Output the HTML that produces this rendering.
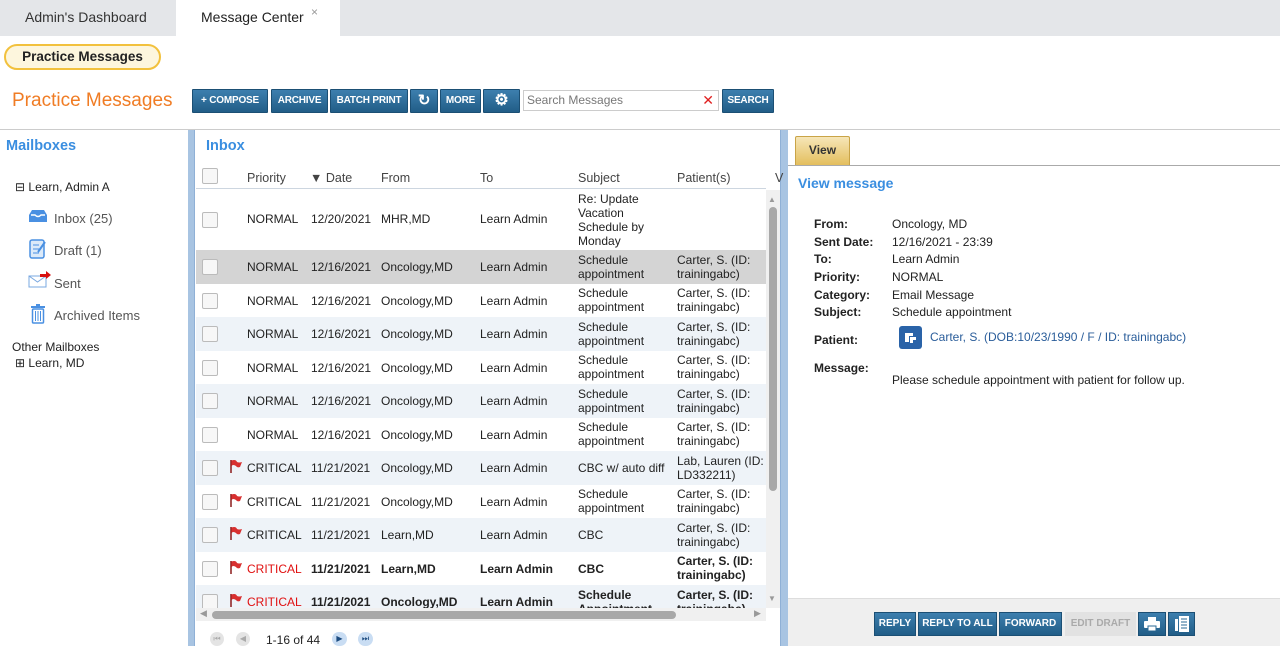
<!DOCTYPE html>
<html><head><meta charset="utf-8">
<style>
*{box-sizing:border-box;margin:0;padding:0}
body{width:1280px;height:646px;overflow:hidden;background:#fff;font-family:"Liberation Sans",Arial,sans-serif;font-size:12px;color:#222;position:relative}
.a{position:absolute}
.tabbar{left:0;top:0;width:1280px;height:36px;background:#e4e6e9}
.tab{top:0;height:36px;line-height:34px;font-size:14px;color:#333}
.btn{top:89px;height:24px;background:linear-gradient(#3d7fae,#215d87);border:1px solid #1b4f74;color:#fff;font-weight:bold;font-size:10px;line-height:22px;text-align:center;border-radius:1px;letter-spacing:-0.2px}
.row{left:196px;width:570px;font-size:12px;color:#222}
.row div{position:absolute}
.cb{left:6px;width:16px;height:16px;border:1px solid #bbb;border-radius:2px;background:#f7f7f7}
.two{line-height:14px}
.hd{top:171px;color:#444;font-size:12.5px}
.lbl{left:814px;font-weight:bold;color:#222;font-size:12px}
.val{left:892px;font-size:12px;color:#222}
.fb{top:612px;height:24px;background:linear-gradient(#3d7fae,#215d87);border:1px solid #1b4f74;color:#fff;font-weight:bold;font-size:10px;line-height:22px;text-align:center}
.flag{position:absolute;left:33px;width:14px;height:14px}
</style></head><body>
<div class="a tabbar"></div>
<div class="a tab" style="left:25px">Admin's Dashboard</div>
<div class="a" style="left:176px;top:0;width:164px;height:36px;background:#fff"></div>
<div class="a tab" style="left:201px;color:#222">Message Center</div>
<div class="a" style="left:311px;top:5px;color:#999;font-size:12px">×</div>

<div class="a" style="left:4px;top:44px;width:157px;height:26px;border:2px solid #f2c13d;border-radius:13px;background:#fdf6dd;text-align:center;line-height:22px;font-size:13.5px;font-weight:bold;color:#222">Practice Messages</div>

<div class="a" style="left:12px;top:90px;font-size:19px;color:#f07c24">Practice Messages</div>
<div class="a btn" style="left:192px;width:76px">+ COMPOSE</div>
<div class="a btn" style="left:271px;width:57px">ARCHIVE</div>
<div class="a btn" style="left:330px;width:78px">BATCH PRINT</div>
<div class="a btn" style="left:410px;width:28px;font-size:15px">↻</div>
<div class="a btn" style="left:440px;width:41px">MORE</div>
<div class="a btn" style="left:483px;width:37px;font-size:16px;line-height:21px">⚙</div>
<div class="a" style="left:523px;top:90px;width:196px;height:21px;border:1px solid #ccc;color:#777;padding-left:3px;line-height:19px;font-size:12px">Search Messages<span style="position:absolute;right:4px;color:#e02020;font-size:14px">✕</span></div>
<div class="a btn" style="left:722px;width:52px">SEARCH</div>

<div class="a" style="left:0;top:129px;width:1280px;height:1px;background:#ccc"></div>

<!-- left -->
<div class="a" style="left:6px;top:138px;font-size:14.5px;font-weight:bold;color:#3a8ee0">Mailboxes</div>
<div class="a" style="left:15px;top:180px;font-size:12px">⊟ Learn, Admin A</div>
<svg class="a" style="left:28px;top:209px" width="20" height="14" viewBox="0 0 20 14"><path d="M1 6 L4 1 H16 L19 6 V13 H1 Z" fill="#4a90e2"/><path d="M3 6 H7 Q10 9 13 6 H17" fill="none" stroke="#fff" stroke-width="1.5"/></svg>
<div class="a" style="left:54px;top:211px;font-size:13px;color:#555">Inbox (25)</div>
<svg class="a" style="left:29px;top:239px" width="18" height="20" viewBox="0 0 18 20"><rect x="1" y="1" width="14" height="18" rx="2" fill="#dceaf9" stroke="#4a90e2" stroke-width="1.5"/><path d="M4 6H10M4 10H10M4 14H10" stroke="#4a90e2"/><path d="M9 13 L16 3" stroke="#4a90e2" stroke-width="2"/></svg>
<div class="a" style="left:54px;top:243px;font-size:13px;color:#555">Draft (1)</div>
<svg class="a" style="left:28px;top:270px" width="24" height="18" viewBox="0 0 24 18"><rect x="1" y="6" width="17" height="11" fill="#fff" stroke="#7aa8e0"/><path d="M1 6 L9.5 12 L18 6" fill="none" stroke="#7aa8e0"/><path d="M12 4 H18 V1 L23 5 L18 9 V7 H12Z" fill="#d81010"/></svg>
<div class="a" style="left:54px;top:276px;font-size:13px;color:#555">Sent</div>
<svg class="a" style="left:30px;top:304px" width="16" height="20" viewBox="0 0 16 20"><rect x="1" y="2" width="14" height="2" fill="#4a90e2"/><rect x="6" y="0" width="4" height="2" fill="#4a90e2"/><rect x="2.5" y="5" width="11" height="14" rx="1" fill="none" stroke="#4a90e2" stroke-width="1.5"/><path d="M5.5 7V17M8 7V17M10.5 7V17" stroke="#4a90e2"/></svg>
<div class="a" style="left:54px;top:308px;font-size:13px;color:#555">Archived Items</div>
<div class="a" style="left:12px;top:340px;font-size:12px">Other Mailboxes</div>
<div class="a" style="left:15px;top:356px;font-size:12px">⊞ Learn, MD</div>

<!-- splitters -->
<div class="a" style="left:188px;top:130px;width:7px;height:516px;background:#a8c4e2;border-right:1px solid #8fb0d6"></div>
<div class="a" style="left:780px;top:130px;width:8px;height:516px;background:#a8c4e2;border-left:1px solid #8fb0d6"></div>

<!-- middle -->
<div class="a" style="left:206px;top:138px;font-size:14.5px;font-weight:bold;color:#3a8ee0">Inbox</div>
<div class="a cb" style="left:202px;top:168px"></div>
<div class="a hd" style="left:247px">Priority</div>
<div class="a hd" style="left:310px">▼ Date</div>
<div class="a hd" style="left:381px">From</div>
<div class="a hd" style="left:480px">To</div>
<div class="a hd" style="left:578px">Subject</div>
<div class="a hd" style="left:677px">Patient(s)</div>
<div class="a hd" style="left:775px">V</div>
<div class="a" style="left:196px;top:188px;width:570px;height:1px;background:#cdd6e0"></div>

<div class="a row" style="top:190px;height:60px;background:#fff">
<div class="cb" style="top:22px"></div><div style="left:51px;top:22px">NORMAL</div><div style="left:115px;top:22px">12/20/2021</div><div style="left:185px;top:22px">MHR,MD</div><div style="left:284px;top:22px">Learn Admin</div><div class="two" style="left:382px;top:2px">Re: Update<br>Vacation<br>Schedule by<br>Monday</div></div>

<div class="a row" style="top:250px;height:34px;background:#d4d4d4">
<div class="cb" style="top:9px"></div><div style="left:51px;top:10px">NORMAL</div><div style="left:115px;top:10px">12/16/2021</div><div style="left:185px;top:10px">Oncology,MD</div><div style="left:284px;top:10px">Learn Admin</div><div class="two" style="left:382px;top:3px">Schedule<br>appointment</div><div class="two" style="left:481px;top:3px">Carter, S. (ID:<br>trainingabc)</div></div>

<div class="a row" style="top:284px;height:33px;background:#fff"><div class="cb" style="top:9px"></div><div style="left:51px;top:10px">NORMAL</div><div style="left:115px;top:10px">12/16/2021</div><div style="left:185px;top:10px">Oncology,MD</div><div style="left:284px;top:10px">Learn Admin</div><div class="two" style="left:382px;top:2px">Schedule<br>appointment</div><div class="two" style="left:481px;top:2px">Carter, S. (ID:<br>trainingabc)</div></div>
<div class="a row" style="top:317px;height:34px;background:#eef3f8"><div class="cb" style="top:9px"></div><div style="left:51px;top:10px">NORMAL</div><div style="left:115px;top:10px">12/16/2021</div><div style="left:185px;top:10px">Oncology,MD</div><div style="left:284px;top:10px">Learn Admin</div><div class="two" style="left:382px;top:3px">Schedule<br>appointment</div><div class="two" style="left:481px;top:3px">Carter, S. (ID:<br>trainingabc)</div></div>
<div class="a row" style="top:351px;height:33px;background:#fff"><div class="cb" style="top:9px"></div><div style="left:51px;top:10px">NORMAL</div><div style="left:115px;top:10px">12/16/2021</div><div style="left:185px;top:10px">Oncology,MD</div><div style="left:284px;top:10px">Learn Admin</div><div class="two" style="left:382px;top:2px">Schedule<br>appointment</div><div class="two" style="left:481px;top:2px">Carter, S. (ID:<br>trainingabc)</div></div>
<div class="a row" style="top:384px;height:34px;background:#eef3f8"><div class="cb" style="top:9px"></div><div style="left:51px;top:10px">NORMAL</div><div style="left:115px;top:10px">12/16/2021</div><div style="left:185px;top:10px">Oncology,MD</div><div style="left:284px;top:10px">Learn Admin</div><div class="two" style="left:382px;top:3px">Schedule<br>appointment</div><div class="two" style="left:481px;top:3px">Carter, S. (ID:<br>trainingabc)</div></div>
<div class="a row" style="top:418px;height:33px;background:#fff"><div class="cb" style="top:9px"></div><div style="left:51px;top:10px">NORMAL</div><div style="left:115px;top:10px">12/16/2021</div><div style="left:185px;top:10px">Oncology,MD</div><div style="left:284px;top:10px">Learn Admin</div><div class="two" style="left:382px;top:2px">Schedule<br>appointment</div><div class="two" style="left:481px;top:2px">Carter, S. (ID:<br>trainingabc)</div></div>

<div class="a row" style="top:451px;height:34px;background:#eef3f8"><div class="cb" style="top:9px"></div><svg class="flag" style="top:8px" viewBox="0 0 14 14"><path d="M2 1V14" stroke="#8b1a1a" stroke-width="1.5"/><path d="M2.5 1.5 Q7 0 8 3 Q10 4 13 3 L11 8 Q8 9 7 7 Q4 5 2.5 7Z" fill="#d83030"/></svg><div style="left:51px;top:10px">CRITICAL</div><div style="left:115px;top:10px">11/21/2021</div><div style="left:185px;top:10px">Oncology,MD</div><div style="left:284px;top:10px">Learn Admin</div><div style="left:382px;top:10px">CBC w/ auto diff</div><div class="two" style="left:481px;top:3px">Lab, Lauren (ID:<br>LD332211)</div></div>
<div class="a row" style="top:485px;height:33px;background:#fff"><div class="cb" style="top:9px"></div><svg class="flag" style="top:8px" viewBox="0 0 14 14"><path d="M2 1V14" stroke="#8b1a1a" stroke-width="1.5"/><path d="M2.5 1.5 Q7 0 8 3 Q10 4 13 3 L11 8 Q8 9 7 7 Q4 5 2.5 7Z" fill="#d83030"/></svg><div style="left:51px;top:10px">CRITICAL</div><div style="left:115px;top:10px">11/21/2021</div><div style="left:185px;top:10px">Oncology,MD</div><div style="left:284px;top:10px">Learn Admin</div><div class="two" style="left:382px;top:2px">Schedule<br>appointment</div><div class="two" style="left:481px;top:2px">Carter, S. (ID:<br>trainingabc)</div></div>
<div class="a row" style="top:518px;height:34px;background:#eef3f8"><div class="cb" style="top:9px"></div><svg class="flag" style="top:8px" viewBox="0 0 14 14"><path d="M2 1V14" stroke="#8b1a1a" stroke-width="1.5"/><path d="M2.5 1.5 Q7 0 8 3 Q10 4 13 3 L11 8 Q8 9 7 7 Q4 5 2.5 7Z" fill="#d83030"/></svg><div style="left:51px;top:10px">CRITICAL</div><div style="left:115px;top:10px">11/21/2021</div><div style="left:185px;top:10px">Learn,MD</div><div style="left:284px;top:10px">Learn Admin</div><div style="left:382px;top:10px">CBC</div><div class="two" style="left:481px;top:3px">Carter, S. (ID:<br>trainingabc)</div></div>
<div class="a row" style="top:552px;height:33px;background:#fff;font-weight:bold"><div class="cb" style="top:9px"></div><svg class="flag" style="top:8px" viewBox="0 0 14 14"><path d="M2 1V14" stroke="#8b1a1a" stroke-width="1.5"/><path d="M2.5 1.5 Q7 0 8 3 Q10 4 13 3 L11 8 Q8 9 7 7 Q4 5 2.5 7Z" fill="#d83030"/></svg><div style="left:51px;top:10px;color:#e01010;font-weight:normal">CRITICAL</div><div style="left:115px;top:10px">11/21/2021</div><div style="left:185px;top:10px">Learn,MD</div><div style="left:284px;top:10px">Learn Admin</div><div style="left:382px;top:10px">CBC</div><div class="two" style="left:481px;top:2px">Carter, S. (ID:<br>trainingabc)</div></div>
<div class="a row" style="top:585px;height:23px;background:#eef3f8;font-weight:bold;overflow:hidden"><div class="cb" style="top:9px"></div><svg class="flag" style="top:8px" viewBox="0 0 14 14"><path d="M2 1V14" stroke="#8b1a1a" stroke-width="1.5"/><path d="M2.5 1.5 Q7 0 8 3 Q10 4 13 3 L11 8 Q8 9 7 7 Q4 5 2.5 7Z" fill="#d83030"/></svg><div style="left:51px;top:10px;color:#e01010;font-weight:normal">CRITICAL</div><div style="left:115px;top:10px">11/21/2021</div><div style="left:185px;top:10px">Oncology,MD</div><div style="left:284px;top:10px">Learn Admin</div><div class="two" style="left:382px;top:3px">Schedule<br>Appointment</div><div class="two" style="left:481px;top:3px">Carter, S. (ID:<br>trainingabc)</div></div>

<!-- scrollbars -->
<div class="a" style="left:766px;top:190px;width:14px;height:418px;background:#f0f0f0"></div>
<div class="a" style="left:769px;top:207px;width:8px;height:284px;background:#a8a8a8;border-radius:4px"></div>
<div class="a" style="left:768px;top:195px;color:#999;font-size:8px">▲</div>
<div class="a" style="left:768px;top:594px;color:#999;font-size:8px">▼</div>
<div class="a" style="left:196px;top:608px;width:570px;height:13px;background:#f0f0f0"></div>
<div class="a" style="left:212px;top:611px;width:464px;height:8px;background:#a8a8a8;border-radius:4px"></div>
<div class="a" style="left:200px;top:608px;color:#999;font-size:9px">◀</div>
<div class="a" style="left:754px;top:608px;color:#999;font-size:9px">▶</div>

<!-- pagination -->
<div class="a" style="left:210px;top:632px;width:14px;height:14px;border-radius:7px;background:#e4e4e4;color:#aaa;font-size:8px;text-align:center;line-height:14px">⏮</div>
<div class="a" style="left:236px;top:632px;width:14px;height:14px;border-radius:7px;background:#e4e4e4;color:#aaa;font-size:8px;text-align:center;line-height:14px">◀</div>
<div class="a" style="left:266px;top:633px;font-size:12px">1-16 of 44</div>
<div class="a" style="left:332px;top:632px;width:15px;height:14px;border-radius:7px;background:#c9ddf3;color:#1d4c80;font-size:8px;text-align:center;line-height:14px">▶</div>
<div class="a" style="left:358px;top:632px;width:15px;height:14px;border-radius:7px;background:#c9ddf3;color:#1d4c80;font-size:8px;text-align:center;line-height:14px">⏭</div>

<!-- right -->
<div class="a" style="left:795px;top:136px;width:55px;height:30px;background:linear-gradient(#f6e6b8,#e3bd5a);border:1px solid #c9a447;border-bottom:none;border-radius:2px 2px 0 0;text-align:center;line-height:26px;font-weight:bold;font-size:12px;color:#333">View</div>
<div class="a" style="left:788px;top:165px;width:492px;height:1px;background:#aaa"></div>
<div class="a" style="left:798px;top:175px;font-size:14px;font-weight:bold;color:#3a8ee0">View message</div>
<div class="a lbl" style="top:217px">From:</div><div class="a val" style="top:217px">Oncology, MD</div>
<div class="a lbl" style="top:235px">Sent Date:</div><div class="a val" style="top:235px">12/16/2021 - 23:39</div>
<div class="a lbl" style="top:252px">To:</div><div class="a val" style="top:252px">Learn Admin</div>
<div class="a lbl" style="top:270px">Priority:</div><div class="a val" style="top:270px">NORMAL</div>
<div class="a lbl" style="top:288px">Category:</div><div class="a val" style="top:288px">Email Message</div>
<div class="a lbl" style="top:305px">Subject:</div><div class="a val" style="top:305px">Schedule appointment</div>
<div class="a lbl" style="top:333px">Patient:</div>
<div class="a" style="left:899px;top:326px;width:23px;height:23px;background:#2a63a8;border-radius:3px"><svg width="23" height="23" viewBox="0 0 23 23"><path d="M6 7H14V10H10V16H6Z M11 11H17V14H14V17H11Z" fill="#fff"/></svg></div>
<div class="a" style="left:930px;top:330px;font-size:12px;color:#2a5d9a">Carter, S. (DOB:10/23/1990 / F / ID: trainingabc)</div>
<div class="a lbl" style="top:361px">Message:</div>
<div class="a val" style="top:373px">Please schedule appointment with patient for follow up.</div>

<div class="a" style="left:788px;top:598px;width:492px;height:48px;background:#efefef;border-top:1px solid #ddd"></div>
<div class="a fb" style="left:874px;width:42px">REPLY</div>
<div class="a fb" style="left:918px;width:79px">REPLY TO ALL</div>
<div class="a fb" style="left:999px;width:63px">FORWARD</div>
<div class="a" style="left:1065px;top:612px;width:71px;height:24px;background:#e2e2e2;color:#aaa;font-weight:bold;font-size:10px;line-height:24px;text-align:center">EDIT DRAFT</div>
<div class="a fb" style="left:1138px;width:28px"><svg width="16" height="14" viewBox="0 0 16 14" style="margin-top:4px"><rect x="4" y="0" width="8" height="4" fill="#fff"/><rect x="0" y="4" width="16" height="7" rx="1" fill="#fff"/><rect x="4" y="9" width="8" height="5" fill="#fff" stroke="#2a6a96"/></svg></div>
<div class="a fb" style="left:1168px;width:27px"><svg width="14" height="16" viewBox="0 0 14 16" style="margin-top:3px"><rect x="0" y="3" width="3" height="12" fill="#fff"/><rect x="4" y="0" width="10" height="16" fill="#fff"/><path d="M6 3H12M6 6H12M6 9H12M6 12H12" stroke="#2a6a96"/></svg></div>
</body></html>
